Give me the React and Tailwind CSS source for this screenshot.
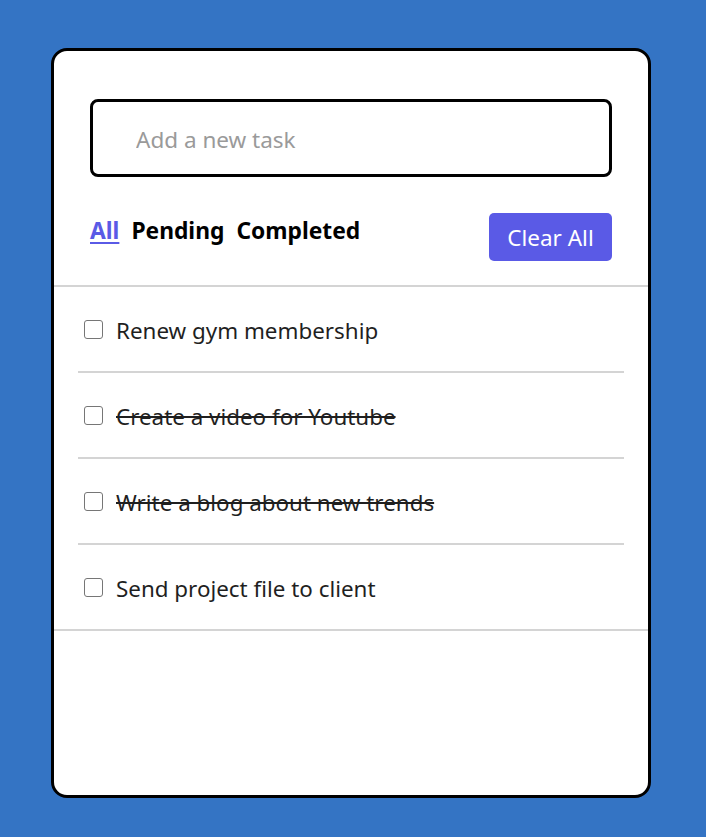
export default function App() {
  const tasks = [
    { text: "Renew gym membership", done: false },
    { text: "Create a video for Youtube", done: true },
    { text: "Write a blog about new trends", done: true },
    { text: "Send project file to client", done: false },
  ];
  return (
    <div
      className="min-h-[837px] bg-[#3474c4] pt-[48px] pl-[51px]"
      style={{ fontFamily: '"Noto Sans", "Open Sans", sans-serif' }}
    >
      <div className="w-[600px] h-[750px] border-[3px] border-black rounded-[16px] bg-white overflow-hidden">
        <div className="px-[36px] pt-[48px]">
          <input
            type="text"
            placeholder="Add a new task"
            className="w-full h-[78px] border-[3px] border-black rounded-[8px] pl-[43px] pt-[2px] text-[22.5px] text-[#222] placeholder:text-[#9a9a9a] outline-none"
          />
        </div>
        <div className="flex items-start justify-between px-[36px] pt-[36px] pb-[24px]">
          <div className="flex gap-[12px] text-[22.8px] font-bold leading-[30px] mt-[3px]">
            <span className="text-[#5a5ae6] underline underline-offset-[3px]">All</span>
            <span className="text-black">Pending</span>
            <span className="text-black">Completed</span>
          </div>
          <button className="w-[123px] h-[48px] pt-[1px] bg-[#5a5ae6] text-white text-[22.5px] rounded-[5px]">
            Clear All
          </button>
        </div>
        <ul className="border-t-2 border-b-2 border-[#d4d4d4]">
          {tasks.map((t, i) => (
            <li
              key={i}
              className={
                "mx-[24px] flex items-center pl-[6px] " +
                (i < tasks.length - 1 ? "h-[86px] border-b-2 border-[#d4d4d4]" : "h-[84px]")
              }
            >
              <span className="w-[19px] h-[19px] border border-[#767676] rounded-[3px] shrink-0" />
              <span
                className={
                  "ml-[13px] pt-[3px] text-[22.4px] text-[#1f1f1f] " + (t.done ? "line-through" : "")
                }
              >
                {t.text}
              </span>
            </li>
          ))}
        </ul>
      </div>
    </div>
  );
}
